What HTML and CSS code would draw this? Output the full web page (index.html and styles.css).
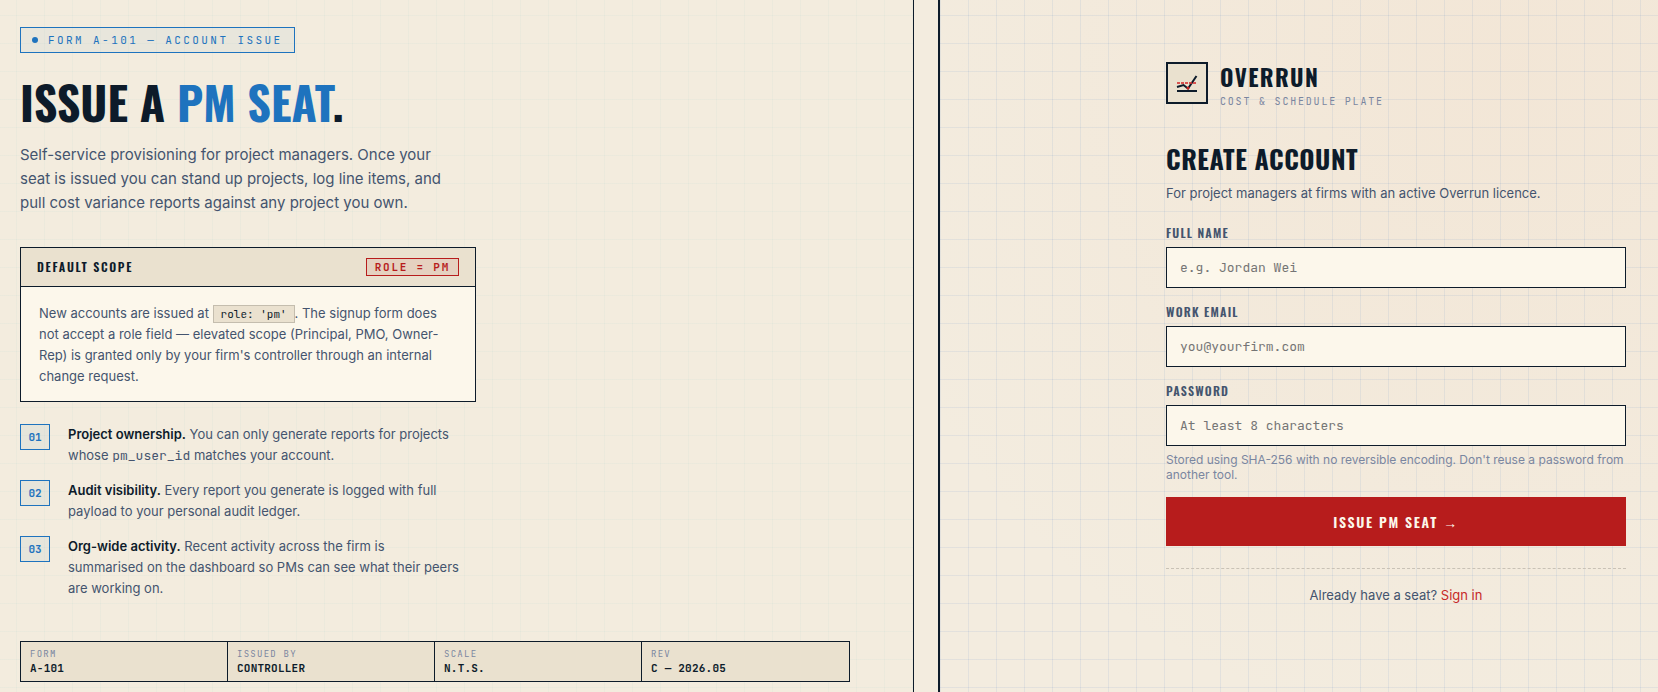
FILE: index.html
```html
<!DOCTYPE html>
<html lang="en">

<head>
    <title>Overrun - Create account</title>
    <meta charset="utf-8">
    <meta name="viewport" content="width=device-width, initial-scale=1">

    <link rel="stylesheet" href="styles.css">
</head>

<body>
    <div class="page">
        <section class="brief">
            <div class="form-tag"><span class="dot"></span>FORM A-101 — ACCOUNT ISSUE</div>
            <h1>ISSUE A <span class="accent">PM SEAT</span>.</h1>
            <p class="lead">Self-service provisioning for project managers. Once your seat is issued you can stand up projects, log line items, and pull cost variance reports against any project you own.</p>

            <div class="scope-card">
                <div class="scope-head">
                    <h2>DEFAULT SCOPE</h2>
                    <span class="stamp">ROLE = PM</span>
                </div>
                <p class="scope-body">New accounts are issued at <code>role: 'pm'</code>. The signup form does not accept a role field — elevated scope (Principal, PMO, Owner-Rep) is granted only by your firm's controller through an internal change request.</p>
            </div>

            <ul class="notes">
                <li>
                    <span class="num">01</span>
                    <p><strong>Project ownership.</strong> You can only generate reports for projects whose <code>pm_user_id</code> matches your account.</p>
                </li>
                <li>
                    <span class="num">02</span>
                    <p><strong>Audit visibility.</strong> Every report you generate is logged with full payload to your personal audit ledger.</p>
                </li>
                <li>
                    <span class="num">03</span>
                    <p><strong>Org-wide activity.</strong> Recent activity across the firm is summarised on the dashboard so PMs can see what their peers are working on.</p>
                </li>
            </ul>

            <dl class="title-block">
                <div>
                    <dt>FORM</dt>
                    <dd>A-101</dd>
                </div>
                <div>
                    <dt>ISSUED BY</dt>
                    <dd>CONTROLLER</dd>
                </div>
                <div>
                    <dt>SCALE</dt>
                    <dd>N.T.S.</dd>
                </div>
                <div>
                    <dt>REV</dt>
                    <dd>C — 2026.05</dd>
                </div>
            </dl>
        </section>

        <main class="signup">
            <div class="signup-inner">
                <div class="brand">
                    <div class="brand-mark">
                        <svg width="22" height="22" viewBox="0 0 22 22" fill="none">
                            <path d="M1 19H21" stroke="#0d1b2a" stroke-width="2" />
                            <path d="M1 15L7.5 13L12 16.5L20.5 4" stroke="#0d1b2a" stroke-width="2" />
                            <path d="M1 11H21" stroke="#d32f2f" stroke-opacity="0.8" stroke-width="2" stroke-dasharray="3 1" />
                            <circle cx="12" cy="16" r="1.5" fill="#c8201f" />
                        </svg>
                    </div>
                    <div>
                        <div class="brand-name">OVERRUN</div>
                        <div class="brand-sub">COST &amp; SCHEDULE PLATE</div>
                    </div>
                </div>

                <h2 class="signup-title">CREATE ACCOUNT</h2>
                <p class="signup-lead">For project managers at firms with an active Overrun licence.</p>

                <form>
                    <div class="field">
                        <label for="name">FULL NAME</label>
                        <input id="name" type="text" placeholder="e.g. Jordan Wei">
                    </div>
                    <div class="field">
                        <label for="email">WORK EMAIL</label>
                        <input id="email" type="email" placeholder="you@yourfirm.com">
                    </div>
                    <div class="field">
                        <label for="password">PASSWORD</label>
                        <input id="password" type="password" placeholder="At least 8 characters">
                        <p class="hint">Stored using SHA-256 with no reversible encoding. Don't reuse a password from another tool.</p>
                    </div>
                    <button class="submit" type="submit">ISSUE PM SEAT →</button>
                </form>

                <p class="signin">Already have a seat? <a href="#">Sign in</a></p>
            </div>
        </main>
    </div>
</body>

</html>
```
FILE: styles.css
```css
:root {
    --ink: #0d1b2a;
    --text: #44546e;
    --muted: #7a86a0;
    --blue: #1e73be;
    --red: #b71c1c;
    --paper: #f3ecdf;
    --panel: #eae1cf;
    --card: #fcf7eb;
    --head: Oswald, "Liberation Sans", sans-serif;
    --mono: "JetBrains Mono", "Liberation Mono", monospace;
    --body: Inter, "Liberation Sans", sans-serif;
    --grid: 28px;
}

* {
    box-sizing: border-box;
}

body {
    margin: 0;
    background: var(--paper);
    color: var(--text);
    font-family: var(--body);
}

h1,
h2,
p,
ul,
dl,
dd {
    margin: 0;
    padding: 0;
}

.page {
    display: grid;
    grid-template-columns: 938fr 720fr;
    min-height: 100vh;
}

/* left side */
.brief {
    margin-right: 24px;
    padding: 27px 63px 8px 20px;
    border-right: 1px solid var(--ink);
    background-color: #f3ecde;
    background-image:
        linear-gradient(rgba(30, 140, 170, 0.03) 1px, transparent 1px),
        linear-gradient(90deg, rgba(30, 140, 170, 0.03) 1px, transparent 1px);
    background-size: var(--grid) var(--grid);
    background-position: 16px 15px;
}

.form-tag {
    display: inline-flex;
    align-items: center;
    gap: 10px;
    height: 26px;
    padding: 0 11px;
    border: 1px solid var(--blue);
    background: rgba(30, 115, 190, 0.05);
    color: var(--blue);
    font: 11px var(--mono);
    letter-spacing: 0.22em;
}

.dot {
    width: 6px;
    height: 6px;
    border-radius: 50%;
    background: var(--blue);
}

h1 {
    margin-top: 22px;
    color: var(--ink);
    font: 700 46px/52px var(--head);
}

.accent {
    color: var(--blue);
}

.lead {
    max-width: 440px;
    margin-top: 16px;
    font-size: 15px;
    line-height: 24px;
}

.scope-card {
    max-width: 456px;
    margin-top: 32px;
    border: 1px solid var(--ink);
    background: var(--card);
}

.scope-head {
    display: flex;
    align-items: center;
    justify-content: space-between;
    height: 39px;
    padding: 0 16px;
    border-bottom: 1px solid var(--ink);
    background: var(--panel);
}

.scope-head h2 {
    color: var(--ink);
    font: 600 12px/18px var(--head);
    letter-spacing: 0.14em;
}

.stamp {
    height: 18px;
    padding: 0 8px;
    border: 1px solid var(--red);
    background: rgba(183, 28, 28, 0.08);
    color: var(--red);
    font: 700 11px/16px var(--mono);
    letter-spacing: 0.16em;
}

.scope-body {
    padding: 16px 18px 14px;
    font-size: 13px;
    line-height: 21px;
}

.scope-body code {
    padding: 1px 7px;
    border: 1px solid #c4bdae;
    background: var(--panel);
    color: var(--ink);
    font: 11px/1 var(--mono);
}

.notes {
    display: flex;
    flex-direction: column;
    gap: 14px;
    max-width: 440px;
    margin-top: 22px;
    list-style: none;
}

.notes li {
    display: flex;
    align-items: flex-start;
    gap: 18px;
}

.num {
    flex: none;
    width: 30px;
    height: 26px;
    border: 1px solid var(--blue);
    background: rgba(30, 115, 190, 0.06);
    color: var(--blue);
    font: 700 11px/24px var(--mono);
    text-align: center;
}

.notes p {
    font-size: 13px;
    line-height: 21px;
}

.notes strong {
    color: var(--ink);
    font-weight: 600;
}

.notes code {
    font: 13px/1 var(--mono);
}

.title-block {
    display: grid;
    grid-template-columns: repeat(4, 1fr);
    margin-top: 42px;
    border: 1px solid var(--ink);
    background: var(--panel);
    font-family: var(--mono);
}

.title-block div {
    padding: 6px 9px 5px;
    border-right: 1px solid var(--ink);
}

.title-block div:last-child {
    border-right: 0;
}

.title-block dt {
    color: var(--muted);
    font-size: 9px;
    line-height: 12px;
    letter-spacing: 0.14em;
}

.title-block dd {
    color: var(--ink);
    font-size: 11px;
    font-weight: 700;
    line-height: 16px;
    letter-spacing: 0.02em;
}

/* right side */
.signup {
    display: flex;
    justify-content: flex-end;
    padding: 62px 32px;
    border-left: 2px solid var(--ink);
    background-image:
        linear-gradient(rgba(30, 100, 190, 0.08) 1px, transparent 1px),
        linear-gradient(90deg, rgba(30, 100, 190, 0.08) 1px, transparent 1px),
        radial-gradient(circle at 80% 10%, rgba(240, 200, 170, 0.16), transparent 80%);
    background-size: var(--grid) var(--grid), var(--grid) var(--grid), auto;
    background-position: 0 15px, 0 15px, 0 0;
}

.signup-inner {
    width: 100%;
    max-width: 460px;
}

.brand {
    display: flex;
    gap: 12px;
}

.brand-mark {
    display: flex;
    align-items: center;
    justify-content: center;
    width: 42px;
    height: 42px;
    border: 2px solid var(--ink);
    background: var(--panel);
}

.brand-name {
    color: var(--ink);
    font: 700 23px/30px var(--head);
    letter-spacing: 0.06em;
}

.brand-sub {
    margin-top: 2px;
    color: var(--muted);
    font: 10px/16px var(--mono);
    letter-spacing: 0.18em;
}

.signup-title {
    margin-top: 30px;
    color: var(--ink);
    font: 700 26px/38px var(--head);
    letter-spacing: 0.02em;
}

.signup-lead {
    margin-top: 4px;
    font-size: 13px;
    line-height: 22px;
}

form {
    margin-top: 20px;
}

.field {
    margin-bottom: 15px;
}

.field label {
    display: block;
    margin-bottom: 5px;
    font: 600 12px/18px var(--head);
    letter-spacing: 0.1em;
}

.field input {
    display: block;
    width: 100%;
    height: 41px;
    padding: 0 13px;
    border: 1px solid var(--ink);
    border-radius: 0;
    background: var(--card);
    color: var(--ink);
    font: 13px var(--mono);
}

.hint {
    margin-top: 6px;
    color: var(--muted);
    font-size: 12px;
    line-height: 15px;
}

.submit {
    display: block;
    width: 100%;
    height: 49px;
    border: 0;
    background: var(--red);
    color: var(--card);
    font: 600 14px var(--head);
    letter-spacing: 0.12em;
    cursor: pointer;
}

.signin {
    margin-top: 22px;
    padding-top: 16px;
    border-top: 1px dashed #c9c2b6;
    font-size: 13px;
    line-height: 20px;
    text-align: center;
}

.signin a {
    color: #c62828;
    text-decoration: none;
}
```
